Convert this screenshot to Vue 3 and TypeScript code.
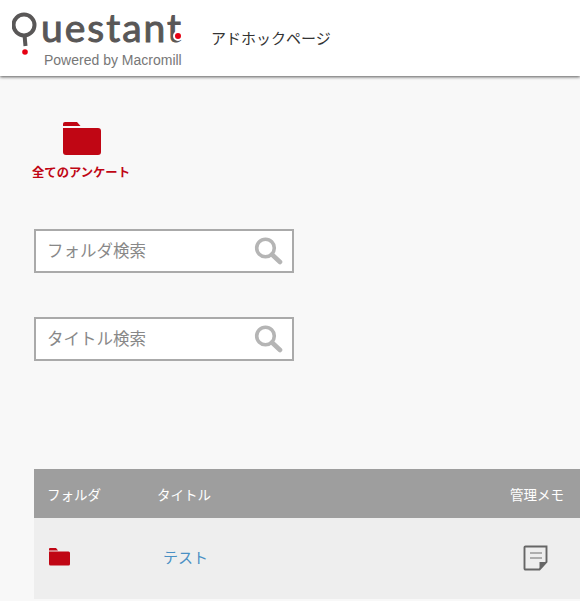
<template>
  <div class="page">
    <header class="header">
      <div class="logo">
        <div class="logo-main">
          <svg class="logo-q" width="26" height="46" viewBox="0 0 26 46">
            <circle cx="12" cy="13" r="10.500" fill="none" stroke="#595757" stroke-width="4" />
            <path d="M12.500 23 L13.500 34" fill="none" stroke="#595757" stroke-width="4" />
            <circle cx="13" cy="40" r="2.800" fill="#e60012" />
          </svg>
          <span class="logo-text">uestant</span>
          <span class="logo-dot"></span>
        </div>
        <div class="logo-sub">Powered by Macromill</div>
      </div>
      <div class="page-title">アドホックページ</div>
    </header>

    <main class="content">
      <div class="all-folder">
        <svg width="38" height="33" viewBox="0 0 38 33">
          <path d="M0 2a2 2 0 0 1 2-2h12l3.500 4H2L0 4z" fill="#c00614" />
          <path d="M0 6h35a3 3 0 0 1 3 3v21a3 3 0 0 1-3 3H3a3 3 0 0 1-3-3z" fill="#c00614" />
        </svg>
        <span class="all-folder-label">全てのアンケート</span>
      </div>

      <div v-for="box in searchBoxes" :key="box" class="search">
        <span class="search-placeholder">{{ box }}</span>
        <svg width="30" height="30" viewBox="0 0 30 30">
          <circle cx="12.500" cy="12" r="8.800" fill="none" stroke="#b5b5b5" stroke-width="3.600" />
          <path d="M19 18.500 L27 26" fill="none" stroke="#b5b5b5" stroke-width="4.600" stroke-linecap="round" />
        </svg>
      </div>

      <div class="table">
        <div class="row head">
          <span class="col-folder">フォルダ</span>
          <span class="col-title">タイトル</span>
          <span class="col-memo">管理メモ</span>
        </div>
        <div class="row body">
          <span class="col-folder">
            <svg width="21" height="18" viewBox="0 0 21 18">
              <path d="M0 1a1 1 0 0 1 1-1h6l2 2.500H0z" fill="#c00614" />
              <path d="M0 3.500h19.500a1.500 1.500 0 0 1 1.500 1.500v11a1.500 1.500 0 0 1-1.500 1.500h-18a1.500 1.500 0 0 1-1.500-1.500z" fill="#c00614" />
            </svg>
          </span>
          <a class="col-title link">テスト</a>
          <span class="col-memo">
            <svg width="26" height="26" viewBox="0 0 26 26">
              <path d="M2.500 1.500h21v15.500l-7 7.500H2.500a1 1 0 0 1-1-1V2.500a1 1 0 0 1 1-1z" fill="none" stroke="#666" stroke-width="1.900" />
              <path d="M24 17h-7.500v7.500z" fill="#666" />
              <path d="M7 8h12M7 13h12" fill="none" stroke="#999" stroke-width="1.600" />
            </svg>
          </span>
        </div>
      </div>
    </main>
  </div>
</template>

<script setup lang="ts">
const searchBoxes: string[] = ["フォルダ検索", "タイトル検索"];
</script>

<style>
html,
body {
  margin: 0;
  background: #f8f8f8;
}
</style>

<style scoped>
.page {
  width: 580px;
  height: 601px;
  overflow: hidden;
  background: #f8f8f8;
  font-family: "Noto Sans CJK JP", "Liberation Sans", sans-serif;
}

.header {
  display: flex;
  height: 76px;
  background: #fff;
  box-shadow: 0 1px 3px rgba(0, 0, 0, 0.65);
  box-sizing: border-box;
  padding-left: 12px;
}

.logo {
  width: 199px;
  flex: none;
}

.logo-main {
  position: relative;
  display: flex;
  height: 52px;
}

.logo-q {
  margin-top: 12px;
  flex: none;
}

.logo-text {
  margin: 2px 0 0 3px;
  font-family: "Lato", sans-serif;
  font-size: 39px;
  line-height: 50px;
  letter-spacing: 2px;
  color: #595757;
  -webkit-text-stroke: 1px #595757;
}

.logo-dot {
  position: absolute;
  left: 161px;
  top: 31px;
  width: 6px;
  height: 6px;
  border-radius: 50%;
  border: 2px solid #fff;
  background: #e60012;
}

.logo-sub {
  margin: 0 0 0 32px;
  font-family: "Liberation Sans", sans-serif;
  font-size: 14px;
  line-height: 16px;
  color: #777;
}

.page-title {
  margin-top: 28px;
  font-size: 15px;
  line-height: 20px;
  color: #333;
}

.content {
  padding: 46px 0 0 34px;
}

.all-folder {
  display: flex;
  flex-direction: column;
  align-items: center;
  width: 98px;
  margin-left: -2px;
}

.all-folder svg {
  margin-left: 2px;
}

.all-folder-label {
  margin-top: 8px;
  font-size: 12.300px;
  line-height: 18px;
  font-weight: 700;
  color: #c00614;
  white-space: nowrap;
}

.search {
  display: flex;
  align-items: center;
  justify-content: space-between;
  box-sizing: border-box;
  width: 260px;
  height: 44px;
  margin-top: 48px;
  padding: 0 9px 0 11px;
  background: #fff;
  border: 2px solid #aaa;
}

.search + .search {
  margin-top: 44px;
}

.search-placeholder {
  margin-top: -3px;
  font-size: 16.500px;
  color: #888;
}

.table {
  width: 546px;
  margin-top: 108px;
}

.row {
  display: flex;
  align-items: center;
}

.head {
  height: 49px;
  background: #9e9e9e;
  color: #fff;
  font-size: 13.500px;
}

.body {
  height: 81px;
  background: #eee;
}

.col-folder {
  width: 123px;
  flex: none;
  box-sizing: border-box;
  padding-left: 13px;
}

.body .col-folder {
  display: flex;
  margin-top: -4px;
  padding-left: 15px;
}

.col-title {
  flex: 1;
}

.col-memo {
  flex: none;
  padding-right: 16px;
}

.link {
  margin-top: -4px;
  padding-left: 6px;
  font-size: 15px;
  color: #4a90c4;
}

.body .col-memo {
  display: flex;
  margin-top: -2px;
  padding-right: 31px;
}
</style>
